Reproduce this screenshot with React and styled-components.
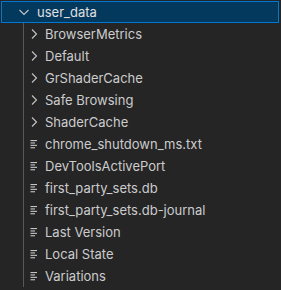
import React from "react";
import styled, { createGlobalStyle } from "styled-components";

const Global = createGlobalStyle`
  html, body {
    margin: 0;
    padding: 0;
    background: #252526;
  }
`;

const Panel = styled.div`
  width: 281px;
  height: 290px;
  background: #252526;
  font-family: Inter, "Open Sans", sans-serif;
  font-size: 13px;
  color: #cccccc;
  overflow: hidden;
  padding-top: 1px;
  box-sizing: border-box;
`;

const Header = styled.div`
  display: flex;
  align-items: center;
  height: 22px;
  margin: 0 2px 0 1px;
  box-sizing: border-box;
  background: #04395e;
  border: 1px solid #0078d4;
  padding-left: 14px;
  color: #e0e0e0;
`;

const Children = styled.div`
  margin-left: 23px;
  border-left: 1px solid #585858;
`;

const Row = styled.div`
  display: flex;
  align-items: center;
  height: 22px;
  padding-left: 2px;
  white-space: nowrap;
`;

const IconBox = styled.span`
  display: inline-flex;
  align-items: center;
  justify-content: center;
  width: 16px;
  height: 16px;
  margin-right: ${(p) => p.gap || 3}px;
  color: #c5c5c5;
`;

const Chevron = ({ down }) => (
  <svg width="16" height="16" viewBox="0 0 16 16" fill="none">
    {down ? (
      <path d="M3.5 6l4.5 4.5L12.5 6" stroke="currentColor" strokeWidth="1.1" />
    ) : (
      <path d="M6 3.5l4.5 4.5L6 12.5" stroke="currentColor" strokeWidth="1.1" />
    )}
  </svg>
);

const FileIcon = () => (
  <svg width="16" height="16" viewBox="0 0 16 16" fill="#c5c5c5">
    <rect x="4.5" y="4" width="6.5" height="1.1" />
    <rect x="4.5" y="6.4" width="4.5" height="1.1" />
    <rect x="4.5" y="8.8" width="6.5" height="1.1" />
    <rect x="4.5" y="11.2" width="4.5" height="1.1" />
  </svg>
);

const folders = ["BrowserMetrics", "Default", "GrShaderCache", "Safe Browsing", "ShaderCache"];
const files = [
  "chrome_shutdown_ms.txt",
  "DevToolsActivePort",
  "first_party_sets.db",
  "first_party_sets.db-journal",
  "Last Version",
  "Local State",
  "Variations",
];

export default function App() {
  return (
    <Panel>
      <Global />
      <Header>
        <IconBox gap={5}>
          <Chevron down />
        </IconBox>
        user_data
      </Header>
      <Children>
        {folders.map((f) => (
          <Row key={f}>
            <IconBox>
              <Chevron />
            </IconBox>
            {f}
          </Row>
        ))}
        {files.map((f) => (
          <Row key={f}>
            <IconBox>
              <FileIcon />
            </IconBox>
            {f}
          </Row>
        ))}
      </Children>
    </Panel>
  );
}
